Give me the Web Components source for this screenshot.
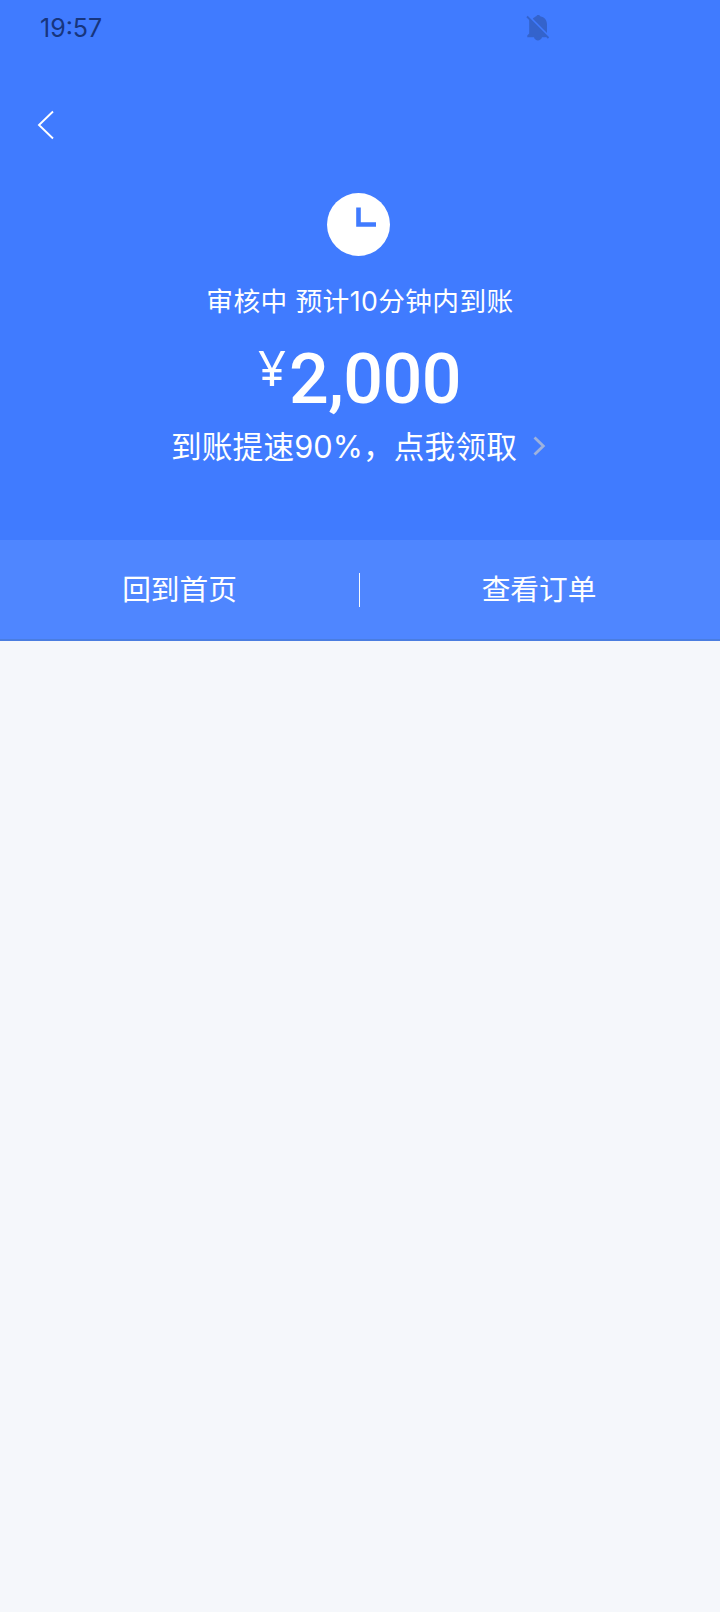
<!DOCTYPE html>
<html lang="zh-CN">
<head>
<meta charset="UTF-8">
<title>审核中</title>
<style>
  body {
    margin: 0;
    min-height: 1612px;
    background: #f5f7fb;
    font-family: Inter, "Noto Sans CJK SC", sans-serif;
  }
</style>
</head>
<body>
<result-page></result-page>
<script>
class StatusBar extends HTMLElement {
  connectedCallback() {
    this.attachShadow({ mode: 'open' });
    this.shadowRoot.innerHTML = `
      <style>
        :host {
          display: flex;
          justify-content: space-between;
          height: 56px;
          padding: 0 170px 0 40px;
          box-sizing: border-box;
          align-items: center;
          color: #17357d;
          font-size: 25px;
          line-height: 56px;
        }
        svg { display: block; }
      </style>
      <span><slot></slot></span>
      <svg width="24" height="28" viewBox="0 0 24 28" fill="#3463cc">
        <path d="M6.800 4.800C8 3.400 9.300 2.700 10.300 2.300C11 .7 13.500.7 14.200 2.300C18.500 3.200 21 6.200 21 10.500V19Z"/>
        <path d="M3.200 4.700V19.500L1.300 21.500V23.300H8C9 27.500 14.800 27.500 16 23.300H19.500L20.800 22.300Z"/>
        <path stroke="#3463cc" stroke-width="1.800" d="M1 2.500L22.500 24"/>
      </svg>
    `;
  }
}
customElements.define('status-bar', StatusBar);

class NavBar extends HTMLElement {
  connectedCallback() {
    this.attachShadow({ mode: 'open' });
    this.shadowRoot.innerHTML = `
      <style>
        :host {
          display: flex;
          align-items: center;
          height: 137px;
          padding-left: 37px;
          box-sizing: border-box;
        }
        svg { display: block; }
      </style>
      <svg width="18" height="30" viewBox="0 0 18 30" fill="none" stroke="#fff" stroke-width="1.900">
        <path d="M16 1.500L2 15L16 28.500"/>
      </svg>
    `;
  }
}
customElements.define('nav-bar', NavBar);

class MoneyAmount extends HTMLElement {
  connectedCallback() {
    this.attachShadow({ mode: 'open' });
    this.shadowRoot.innerHTML = `
      <style>
        :host {
          display: flex;
          justify-content: center;
          color: #fff;
          font-family: Roboto, "Noto Sans CJK SC", sans-serif;
          font-size: 70px;
          font-weight: 500;
          line-height: 83px;
          letter-spacing: -0.600px;
        }
        .unit {
          font-family: "Noto Sans", sans-serif;
          font-size: 49px;
          font-weight: 400;
          line-height: 59px;
          letter-spacing: 0;
          margin-right: 3px;
        }
      </style>
      <span class="unit">¥</span>
      <span><slot></slot></span>
    `;
  }
}
customElements.define('money-amount', MoneyAmount);

class PromoLink extends HTMLElement {
  connectedCallback() {
    this.attachShadow({ mode: 'open' });
    this.shadowRoot.innerHTML = `
      <style>
        :host {
          display: flex;
          justify-content: center;
          align-items: center;
          gap: 16px;
          color: #fff;
          font-size: 30.700px;
          line-height: 46px;
          letter-spacing: 0.100px;
          white-space: nowrap;
        }
        svg {
          display: block;
          margin-bottom: 2px;
        }
      </style>
      <span><slot></slot></span>
      <svg width="13" height="20" viewBox="0 0 13 20" fill="none" stroke="#9eb2dd" stroke-width="2.800">
        <path d="M1.500 1.500L10.300 10L1.500 18.500"/>
      </svg>
    `;
  }
}
customElements.define('promo-link', PromoLink);

class ActionBar extends HTMLElement {
  connectedCallback() {
    this.attachShadow({ mode: 'open' });
    this.shadowRoot.innerHTML = `
      <style>
        :host {
          display: grid;
          grid-template-columns: 359px 1px 358px;
          align-items: center;
          height: 101px;
          box-sizing: border-box;
          border-bottom: 2px solid #4a7de0;
          background: #4f86ff;
          color: #fff;
          font-size: 28.700px;
          line-height: 42px;
          text-align: center;
        }
        .divider {
          height: 34px;
          background: #f4f8ff;
        }
      </style>
      <slot name="left"></slot>
      <i class="divider"></i>
      <slot name="right"></slot>
    `;
  }
}
customElements.define('action-bar', ActionBar);

class ResultPage extends HTMLElement {
  connectedCallback() {
    this.attachShadow({ mode: 'open' });
    this.shadowRoot.innerHTML = `
      <style>
        :host { display: block; }
        .hero {
          height: 540px;
          background: #407bff;
        }
        .clock {
          display: block;
          margin: 0 auto;
          padding-right: 3px;
        }
        .state {
          margin: 25px 0 0;
          color: #fff;
          font-size: 26.700px;
          line-height: 40px;
          letter-spacing: 0.400px;
          text-align: center;
        }
        money-amount { margin-top: 17px; padding-right: 1px; }
        promo-link { margin-top: 3px; padding-right: 3px; }
      </style>
      <div class="hero">
        <status-bar>19:57</status-bar>
        <nav-bar></nav-bar>
        <svg class="clock" width="63" height="63" viewBox="0 0 63 63">
          <circle cx="31.500" cy="31.500" r="31.500" fill="#fff"/>
          <path d="M31.500 14.500V31.500H49" fill="none" stroke="#407bff" stroke-width="4.600"/>
        </svg>
        <p class="state">审核中 预计10分钟内到账</p>
        <money-amount>2,000</money-amount>
        <promo-link>到账提速90%，点我领取</promo-link>
      </div>
      <action-bar>
        <span slot="left">回到首页</span>
        <span slot="right">查看订单</span>
      </action-bar>
    `;
  }
}
customElements.define('result-page', ResultPage);
</script>
</body>
</html>
